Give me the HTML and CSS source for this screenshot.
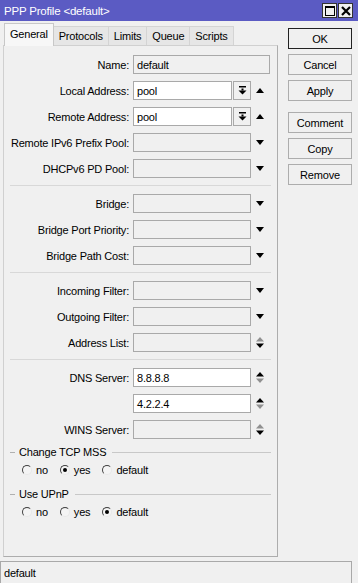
FILE: index.html
```html
<!DOCTYPE html>
<html lang="en">
<head>
  <meta charset="UTF-8" />
  <title>PPP Profile &lt;default&gt;</title>
  <link rel="stylesheet" href="styles.css">
</head>
<body>
<div class="titlebar">
  <span class="title">PPP Profile &lt;default&gt;</span>
  <div class="winbtns">
    <span class="winbtn">
      <svg width="10" height="10" viewBox="0 0 10 10"><rect x="0.5" y="0.5" width="9" height="9" fill="none" stroke="#000" stroke-width="1"/><rect x="0" y="0" width="10" height="2" fill="#000"/></svg>
    </span>
    <span class="winbtn">
      <svg width="10" height="10" viewBox="0 0 10 10"><path d="M1 1 L9 9 M9 1 L1 9" stroke="#000" stroke-width="2.2"/></svg>
    </span>
  </div>
</div>

<div class="main">
  <div class="editor">
    <div class="tabs">
      <span class="tab active">General</span>
      <span class="tab">Protocols</span>
      <span class="tab">Limits</span>
      <span class="tab">Queue</span>
      <span class="tab">Scripts</span>
    </div>

    <div class="panel">
      <div class="row">
        <span class="label">Name:</span>
        <span class="field wide">default</span>
      </div>
      <div class="row">
        <span class="label">Local Address:</span>
        <span class="field short on">pool</span>
        <span class="dropbtn"><svg width="9" height="9" viewBox="0 0 9 9"><rect x="1" y="0" width="7" height="1.5"/><rect x="3.5" y="2.5" width="2" height="2"/><polygon points="0.5,4.5 8.5,4.5 4.5,8.5"/></svg></span>
        <span class="icon"><svg width="8" height="5" viewBox="0 0 8 5"><polygon points="0,5 8,5 4,0"/></svg></span>
      </div>
      <div class="row">
        <span class="label">Remote Address:</span>
        <span class="field short on">pool</span>
        <span class="dropbtn"><svg width="9" height="9" viewBox="0 0 9 9"><rect x="1" y="0" width="7" height="1.5"/><rect x="3.5" y="2.5" width="2" height="2"/><polygon points="0.5,4.5 8.5,4.5 4.5,8.5"/></svg></span>
        <span class="icon"><svg width="8" height="5" viewBox="0 0 8 5"><polygon points="0,5 8,5 4,0"/></svg></span>
      </div>
      <div class="row">
        <span class="label">Remote IPv6 Prefix Pool:</span>
        <span class="field"></span>
        <span class="icon"><svg width="8" height="5" viewBox="0 0 8 5"><polygon points="0,0 8,0 4,5"/></svg></span>
      </div>
      <div class="row">
        <span class="label">DHCPv6 PD Pool:</span>
        <span class="field"></span>
        <span class="icon"><svg width="8" height="5" viewBox="0 0 8 5"><polygon points="0,0 8,0 4,5"/></svg></span>
      </div>

      <div class="sep"></div>

      <div class="row">
        <span class="label">Bridge:</span>
        <span class="field"></span>
        <span class="icon"><svg width="8" height="5" viewBox="0 0 8 5"><polygon points="0,0 8,0 4,5"/></svg></span>
      </div>
      <div class="row">
        <span class="label">Bridge Port Priority:</span>
        <span class="field"></span>
        <span class="icon"><svg width="8" height="5" viewBox="0 0 8 5"><polygon points="0,0 8,0 4,5"/></svg></span>
      </div>
      <div class="row">
        <span class="label">Bridge Path Cost:</span>
        <span class="field"></span>
        <span class="icon"><svg width="8" height="5" viewBox="0 0 8 5"><polygon points="0,0 8,0 4,5"/></svg></span>
      </div>

      <div class="sep"></div>

      <div class="row">
        <span class="label">Incoming Filter:</span>
        <span class="field"></span>
        <span class="icon"><svg width="8" height="5" viewBox="0 0 8 5"><polygon points="0,0 8,0 4,5"/></svg></span>
      </div>
      <div class="row">
        <span class="label">Outgoing Filter:</span>
        <span class="field"></span>
        <span class="icon"><svg width="8" height="5" viewBox="0 0 8 5"><polygon points="0,0 8,0 4,5"/></svg></span>
      </div>
      <div class="row">
        <span class="label">Address List:</span>
        <span class="field"></span>
        <span class="icon"><svg width="8" height="11" viewBox="0 0 8 11"><polygon points="0,4.5 8,4.5 4,0" fill="#909090"/><polygon points="0,6.5 8,6.5 4,11"/></svg></span>
      </div>

      <div class="sep"></div>

      <div class="row">
        <span class="label">DNS Server:</span>
        <span class="field on">8.8.8.8</span>
        <span class="icon"><svg width="8" height="11" viewBox="0 0 8 11"><polygon points="0,4.5 8,4.5 4,0"/><polygon points="0,6.5 8,6.5 4,11" fill="#909090"/></svg></span>
      </div>
      <div class="row">
        <span class="label"></span>
        <span class="field on">4.2.2.4</span>
        <span class="icon"><svg width="8" height="11" viewBox="0 0 8 11"><polygon points="0,4.5 8,4.5 4,0"/><polygon points="0,6.5 8,6.5 4,11" fill="#909090"/></svg></span>
      </div>
      <div class="row">
        <span class="label">WINS Server:</span>
        <span class="field"></span>
        <span class="icon"><svg width="8" height="11" viewBox="0 0 8 11"><polygon points="0,4.5 8,4.5 4,0" fill="#909090"/><polygon points="0,6.5 8,6.5 4,11"/></svg></span>
      </div>

      <div class="group">
        <div class="group-head"><span class="dash"></span><span>Change TCP MSS</span><span class="line"></span></div>
        <div class="radios">
          <label class="radio"><span class="dot"></span>no</label>
          <label class="radio"><span class="dot checked"></span>yes</label>
          <label class="radio"><span class="dot"></span>default</label>
        </div>
      </div>

      <div class="group">
        <div class="group-head"><span class="dash"></span><span>Use UPnP</span><span class="line"></span></div>
        <div class="radios">
          <label class="radio"><span class="dot"></span>no</label>
          <label class="radio"><span class="dot"></span>yes</label>
          <label class="radio"><span class="dot checked"></span>default</label>
        </div>
      </div>
    </div>
  </div>

  <div class="actions">
    <button class="btn default">OK</button>
    <button class="btn">Cancel</button>
    <button class="btn">Apply</button>
    <button class="btn spaced">Comment</button>
    <button class="btn">Copy</button>
    <button class="btn">Remove</button>
  </div>
</div>

<div class="statusbar">default</div>
</body>
</html>
```

FILE: styles.css
```css
* {
  box-sizing: border-box;
}
body {
  margin: 0;
  width: 358px;
  height: 583px;
  overflow: hidden;
  background: #f0f0f0;
  font-family: "Liberation Sans", Arial, sans-serif;
  font-size: 11px;
  letter-spacing: -0.2px;
  color: #000;
}

/* title bar */
.titlebar {
  height: 21px;
  background: #5b5bc3;
  display: flex;
  align-items: center;
  justify-content: space-between;
  padding: 0 5px 0 4px;
}
.title {
  color: #fff;
  font-size: 11.5px;
}
.winbtns {
  display: flex;
  gap: 1px;
}
.winbtn {
  width: 15px;
  height: 15px;
  background: #f0f0f0;
  border: 1px solid #333;
  display: flex;
  align-items: center;
  justify-content: center;
}

.main {
  display: flex;
  height: 536px;
}

/* tabs + panel */
.editor {
  margin-left: 3px;
  width: 275px;
  display: flex;
  flex-direction: column;
}
.tabs {
  height: 24px;
  display: flex;
  align-items: flex-end;
  padding-left: 1px;
}
.tab {
  height: 19px;
  padding: 0 5px;
  display: flex;
  align-items: center;
  background: #e6e6e6;
  border: 1px solid #d4d4d4;
  border-bottom: none;
  margin-right: -1px;
}
.tab.active {
  height: 23px;
  padding: 0 5px 2px;
  margin-bottom: -1px;
  background: #f7f7f7;
  border-color: #c8c8c8;
  position: relative;
  z-index: 1;
}
.panel {
  height: 512px;
  border: 1px solid #adadad;
  border-top-color: #d0d0d0;
  border-left-color: #d0d0d0;
  padding-top: 9px;
}

.row {
  height: 19px;
  margin-bottom: 7px;
  display: flex;
  align-items: center;
}
.label {
  width: 125px;
  text-align: right;
  margin-right: 4px;
  white-space: nowrap;
}
.field {
  width: 118px;
  height: 19px;
  border: 1px solid #a9a9a9;
  background: #f0f0f0;
  padding-left: 3px;
  display: flex;
  align-items: center;
}
.field.on {
  background: #fff;
}
.field.wide {
  width: 137px;
}
.field.short {
  width: 99px;
  margin-right: 1px;
}
.dropbtn {
  width: 18px;
  height: 19px;
  border: 1px solid #a9a9a9;
  background: #f0f0f0;
  display: flex;
  align-items: center;
  justify-content: center;
}
.icon {
  width: 18px;
  display: flex;
  justify-content: center;
  align-items: center;
}
.sep {
  height: 1px;
  background: #d8d8d8;
  margin: 0 6px 8px 6px;
}

/* group boxes */
.group {
  margin-top: 1px;
  margin-bottom: 12px;
}
.group-head {
  height: 12px;
  display: flex;
  align-items: center;
  gap: 4px;
  padding-left: 6px;
  margin-right: 6px;
}
.group-head .dash {
  width: 5px;
  height: 1px;
  background: #b0b0b0;
}
.group-head .line {
  flex: 1;
  height: 1px;
  background: #c8c8c8;
  margin-left: 2px;
}
.radios {
  margin-top: 6px;
  height: 12px;
  display: flex;
  align-items: center;
  gap: 12px;
  padding-left: 18px;
}
.radio {
  display: flex;
  align-items: center;
  gap: 4px;
}
.dot {
  width: 10px;
  height: 10px;
  border-radius: 50%;
  border: 1px solid;
  border-color: #404040 #e8e8e8 #e8e8e8 #404040;
  background: #f4f4f4;
  display: flex;
  align-items: center;
  justify-content: center;
}
.dot.checked::after {
  content: "";
  width: 4px;
  height: 4px;
  border-radius: 50%;
  background: #000;
}

/* buttons */
.actions {
  margin-left: 10px;
  padding-top: 7px;
  display: flex;
  flex-direction: column;
  gap: 5px;
}
.btn {
  width: 64px;
  height: 21px;
  padding: 0;
  font: inherit;
  letter-spacing: inherit;
  color: #000;
  background: #f0f0f0;
  border: 1px solid #adadad;
}
.btn.default {
  border-color: #222;
}
.btn.spaced {
  margin-top: 6px;
}

.statusbar {
  margin-top: 4px;
  width: 352px;
  height: 22px;
  border: 1px solid #a9a9a9;
  border-bottom: none;
  padding-left: 3px;
  display: flex;
  align-items: center;
}
```
